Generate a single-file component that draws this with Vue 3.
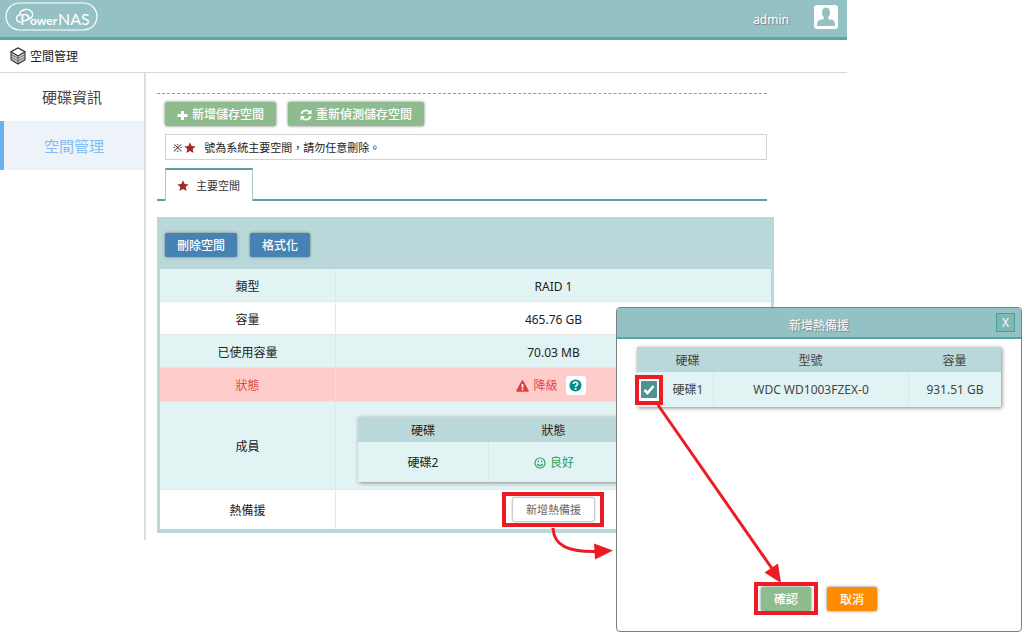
<script setup>
import { ref } from 'vue'

const hotSpareChecked = ref(true)
const members = [{ disk: '硬碟2', status: '良好' }]
const candidates = [{ disk: '硬碟1', model: 'WDC WD1003FZEX-0', size: '931.51 GB' }]
</script>

<template>
  <div class="page" lang="zh-Hant">
    <div class="app">
      <header class="topbar">
        <a class="logo" href="#" aria-label="PowerNAS">
          <svg width="94" height="30" viewBox="0 0 94 30" fill="none" stroke="#fff">
            <rect x="1" y="1" width="91" height="27" rx="13.5" stroke-width="1.2" />
            <path d="M16 20c-6 1-6-8 0-7M15 13c-1-5 8-8 12-3 2 4-1 7-4 7" stroke-width="1.4" />
            <text class="logo-text" y="23" fill="#fff" stroke="none"><tspan x="15">P</tspan><tspan class="logo-small" x="25">ower</tspan><tspan x="53">NAS</tspan></text>
          </svg>
        </a>
        <span class="user-name">admin</span>
        <button class="avatar" aria-label="admin">
          <svg width="24" height="24" viewBox="0 0 24 24">
            <rect width="24" height="24" rx="3" fill="#fff" />
            <path d="M8 7c0-6 8-6 8 0 0 3-.5 4-2 5.500 0 1.500 1 2 3 2 3 .5 4 2 4 6.500H3c0-4.500 1-6 4-6.500 2 0 3-.5 3-2C8.500 11 8 10 8 7z" fill="#94c2c4" />
          </svg>
        </button>
      </header>

      <div class="title-row">
        <svg width="16" height="18" viewBox="0 0 16 18" fill="none" stroke="#333" stroke-width="1.1" stroke-linejoin="round">
          <path d="M8 1l7 3.800v8L8 17l-7-4.200v-8z" fill="#ccc" />
          <path d="M8 1l7 3.800L8 9 1 4.800z" fill="#fff" />
          <path d="M8 9v8M1 7.500l7 4 7-4M1 10l7 4 7-4" stroke-width="0.6" />
        </svg>
        <h1>空間管理</h1>
      </div>

      <div class="body">
        <nav class="sidebar">
          <a href="#disks">硬碟資訊</a>
          <a href="#space" class="active">空間管理</a>
        </nav>

        <main class="main">
          <section class="intro">
            <div class="actions">
              <button class="btn green">
                <svg width="11" height="11" viewBox="0 0 11 11"><path d="M4 1h3v3h3.500v3H7v3H4V7H.5V4H4z" fill="#fff" /></svg>
                新增儲存空間
              </button>
              <button class="btn green">
                <svg width="12" height="12" viewBox="0 0 12 12" fill="none" stroke="#fff" stroke-width="1.900">
                  <path d="M1.500 5C2 1.500 7 0 9.500 3M10.500 7C10 10.500 5 12 2.500 9" />
                  <path d="M11.500.5V5H7zM.5 11.500V7H5z" fill="#fff" stroke="none" />
                </svg>
                重新偵測儲存空間
              </button>
            </div>
            <p class="notice">
              <span>※</span>
              <svg class="star" width="12" height="12" viewBox="0 0 12 12"><path d="M6 .3l1.700 3.700 4 .4-3 2.700.9 4L6 9l-3.600 2.100.9-4-3-2.700 4-.4z" fill="#a52a2a" /></svg>
              <span>號為系統主要空間，請勿任意刪除。</span>
            </p>
            <div class="tabs">
              <button class="tab">
                <svg width="12" height="12" viewBox="0 0 12 12"><path d="M6 .3l1.700 3.700 4 .4-3 2.700.9 4L6 9l-3.600 2.100.9-4-3-2.700 4-.4z" fill="#a52a2a" /></svg>
                主要空間
              </button>
            </div>
          </section>

          <section class="panel">
            <div class="panel-tools">
              <button class="btn blue">刪除空間</button>
              <button class="btn blue">格式化</button>
            </div>
            <table class="info">
              <tbody>
                <tr class="tint"><th scope="row">類型</th><td>RAID 1</td></tr>
                <tr><th scope="row">容量</th><td>465.76 GB</td></tr>
                <tr class="tint"><th scope="row">已使用容量</th><td>70.03 MB</td></tr>
                <tr class="alert">
                  <th scope="row">狀態</th>
                  <td>
                    <div class="status">
                      <svg width="13" height="12" viewBox="0 0 13 12">
                        <path d="M6.500.3q.7 0 1 .6l5.200 9.600q.4 1.200-.8 1.200H1.100q-1.200 0-.8-1.200L5.500.9q.3-.6 1-.6z" fill="#e04040" />
                        <path d="M6.500 4v3.700M6.500 8.600v1.700" stroke="#fff" stroke-width="1.600" />
                      </svg>
                      <span>降級</span>
                      <button class="help" aria-label="說明">
                        <svg width="13" height="13" viewBox="0 0 13 13" fill="none">
                          <circle cx="6.500" cy="6.500" r="6" fill="#008b8b" />
                          <path d="M4.300 5c.3-2.600 4.400-2.300 4.300 0C8.500 6.300 6.700 6.400 6.600 8" stroke="#fff" stroke-width="1.700" />
                          <path d="M5.700 9h1.800v1.700H5.700z" fill="#fff" />
                        </svg>
                      </button>
                    </div>
                  </td>
                </tr>
                <tr class="tint members-row">
                  <th scope="row">成員</th>
                  <td>
                    <table class="members">
                      <thead><tr><th>硬碟</th><th>狀態</th><td></td></tr></thead>
                      <tbody>
                        <tr v-for="m in members" :key="m.disk">
                          <td>{{ m.disk }}</td>
                          <td>
                            <div class="good">
                              <svg width="12" height="12" viewBox="0 0 12 12" fill="none" stroke="#2e9e5b" stroke-width="1.100">
                                <circle cx="6" cy="6" r="5" />
                                <path d="M3.300 7q2.700 3.400 5.400 0M4.300 3.500v1.700M7.700 3.500v1.700" stroke-width="1.300" />
                              </svg>
                              {{ m.status }}
                            </div>
                          </td>
                          <td></td>
                        </tr>
                      </tbody>
                    </table>
                  </td>
                </tr>
                <tr class="spare-row">
                  <th scope="row">熱備援</th>
                  <td><button class="btn plain">新增熱備援</button></td>
                </tr>
              </tbody>
            </table>
          </section>
        </main>
      </div>
    </div>

    <div class="dialog" role="dialog" aria-labelledby="dialog-title">
      <header class="dialog-head">
        <h2 id="dialog-title">新增熱備援</h2>
        <button class="close">X</button>
      </header>
      <table class="picker">
        <colgroup><col class="c-check" /><col class="c-disk" /><col /><col class="c-size" /></colgroup>
        <thead><tr><td></td><th>硬碟</th><th>型號</th><th>容量</th></tr></thead>
        <tbody>
          <tr v-for="c in candidates" :key="c.disk">
            <td>
              <label class="check" for="disk-1">
                <input id="disk-1" v-model="hotSpareChecked" type="checkbox" aria-label="硬碟1" />
                <svg v-if="hotSpareChecked" width="12" height="12" viewBox="0 0 12 12" fill="none" stroke="#fff" stroke-width="2.600"><path d="M1.500 6l3 3 6-7" /></svg>
              </label>
            </td>
            <td>{{ c.disk }}</td>
            <td>{{ c.model }}</td>
            <td>{{ c.size }}</td>
          </tr>
        </tbody>
      </table>
      <footer class="dialog-foot">
        <button class="btn green">確認</button>
        <button class="btn orange">取消</button>
      </footer>
    </div>

    <svg class="marks" width="1024" height="638" viewBox="0 0 1024 638" fill="none" stroke="#ed1c24" aria-hidden="true">
      <g stroke-width="4">
        <rect x="504" y="494" width="98" height="31" />
        <rect x="637" y="377" width="24" height="26" />
        <rect x="756" y="584" width="60" height="29" />
      </g>
      <path d="M553 528C554 546 568 552 596 551.500" stroke-width="3" />
      <path d="M658 405L773 570" stroke-width="3" />
      <path d="M594 543.500L613 550.500L595 559.500zM781 583L764.500 572.500L778 563.500z" fill="#ed1c24" stroke="none" />
    </svg>
  </div>
</template>

<style>
body {
  margin: 0;
  background: #fff;
}
</style>

<style scoped>
.page {
  position: relative;
  min-height: 100vh;
  overflow: hidden;
  font-family: "Noto Sans", "Noto Sans CJK TC", sans-serif;
  font-size: 12px;
  line-height: 18px;
  color: #222;
}
.page * { box-sizing: border-box; }
button {
  font: inherit;
  padding: 0;
  border: 0;
  cursor: pointer;
}
svg { display: block; flex: none; }
a { text-decoration: none; color: inherit; }
h1, h2, p { margin: 0; font-size: 12px; font-weight: 400; }

.app { margin-right: 177px; }
.topbar {
  display: flex;
  align-items: flex-start;
  height: 40px;
  padding: 2px 9px 0 5px;
  background: #94c2c4;
  border-bottom: 3px solid #55aaaa;
}
.logo { margin-right: auto; }
.logo-text { font: 16px Lato, sans-serif; }
.logo-small { font: bold 12px Lato, sans-serif; }
.user-name {
  margin: 9px 25px 0 0;
  color: #fff;
  text-shadow: 1px 1px 1px #777;
}
.avatar { margin-top: 3px; background: none; }
.title-row {
  display: flex;
  align-items: center;
  gap: 4px;
  height: 33px;
  padding-left: 10px;
  border-bottom: 1px solid #d8d8d8;
}
.title-row h1 { padding-top: 2px; }
.body { display: flex; }
.sidebar {
  width: 146px;
  flex: none;
  border-right: 2px solid #ddd;
}
.sidebar a {
  display: flex;
  align-items: center;
  justify-content: center;
  height: 48px;
  font-size: 15px;
  color: #444;
}
.sidebar .active {
  height: 49px;
  border-left: 4px solid #6cb1f2;
  background: #edf3f8;
  color: #80bdf5;
}
.main { flex: 1; padding: 20px 73px 7px 11px; }
.intro {
  margin-right: 7px;
  padding-top: 8px;
  border-top: 1px dashed #999;
}
.actions { display: flex; gap: 12px; padding-left: 8px; }
.btn {
  display: inline-flex;
  align-items: center;
  justify-content: center;
  gap: 4px;
  height: 24px;
  padding: 2px 12px 0;
  border-radius: 2px;
  color: #fff;
  font-weight: 500;
  box-shadow: 0 0 3px #777;
}
.green { background: #8fbc8f; }
.blue { background: #4682b4; }
.orange { background: #ff8c00; }
.notice {
  display: flex;
  align-items: center;
  height: 26px;
  margin: 8px 0 8px 8px;
  padding: 2px 0 0 7px;
  border: 1px solid #d3d3d3;
  font-size: 11px;
}
.star { margin: 0 8px 0 2px; }
.tabs {
  display: flex;
  height: 33px;
  margin-bottom: 16px;
  padding-left: 8px;
  border-bottom: 2px solid #5f9ea0;
}
.tab {
  display: flex;
  align-items: center;
  gap: 7px;
  height: 33px;
  padding: 0 12px 0 11px;
  background: #fff;
  border: 1px solid #a5c9ca;
  border-top: 2px solid #5f9ea0;
  border-bottom: 0;
  font-size: 11px;
  color: #333;
}
.panel { padding: 0 3px 4px; background: #bad7d9; }
.panel-tools {
  display: flex;
  gap: 13px;
  height: 52px;
  padding: 16px 5px 0;
}
table { border-collapse: separate; border-spacing: 0; table-layout: fixed; }
th, td { padding: 0; font-weight: 400; text-align: center; vertical-align: middle; }
.info { width: 100%; background: #fff; }
.info > tbody > tr > th { width: 176px; border-right: 1px solid #e2e6e6; }
.info > tbody > tr > * { height: 33px; border-bottom: 1px solid #e2e6e6; padding-top: 3px; }
.tint { background: #e1f3f3; }
.info .alert { background: #ffcccc; color: #e04848; }
.info > tbody > .alert > * { height: 34px; padding: 2px 0 0; }
.info > tbody > .members-row > * { height: 88px; padding: 3px 0 0; }
.info > tbody > .members-row > td { padding: 8px 0 0; }
.info > tbody > .spare-row > th { padding: 3px 0 0; }
.info > tbody > .spare-row > * { height: 39px; border-bottom: 0; padding: 0; }
.status, .good { display: flex; align-items: center; justify-content: center; gap: 4px; }
.status { margin-right: 5px; }
.help {
  display: grid;
  place-items: center;
  width: 20px;
  height: 19px;
  margin-left: 4px;
  border-radius: 3px;
  background: #fff;
}
.members {
  width: 90%;
  margin: 0 auto;
  background: #e1f3f3;
  box-shadow: 1px 1px 4px #888;
}
.members thead, .picker thead { background: #bad7d9; }
.members thead tr > * { height: 25px; padding-top: 2px; }
.members tbody td { height: 40px; padding-top: 2px; border-left: 1px solid #d8e8e8; }
.members tbody td:first-child { border-left: 0; }
.good { color: #2e9e5b; }
.plain {
  height: 25px;
  border: 1px solid #ccc;
  border-radius: 3px;
  background: #fff;
  color: #666;
  font-size: 11px;
  font-weight: 400;
  padding: 1px 13px 0;
  vertical-align: middle;
  box-shadow: 0 0 2px #bbb;
}

.dialog {
  position: absolute;
  top: 307px;
  left: 616px;
  display: flex;
  flex-direction: column;
  width: 406px;
  height: 325px;
  border: 1px solid #788080;
  border-radius: 4px;
  background: #fff;
}
.dialog-head {
  position: relative;
  height: 31px;
  padding-top: 9px;
  background: #94c2c4;
  border-bottom: 2px solid #4fa9a8;
  border-radius: 3px 3px 0 0;
  color: #fff;
  text-align: center;
  text-shadow: 1px 1px 1px #777;
}
.close {
  position: absolute;
  top: 5px;
  right: 6px;
  width: 19px;
  height: 19px;
  border: 1px solid #4b9d98;
  background: #7db7b6;
  color: #fff;
}
.picker {
  width: calc(100% - 40px);
  margin: 8px 20px 0;
  background: #e1f3f3;
  box-shadow: 1px 1px 4px #888;
  color: #444;
}
.c-check { width: 25px; }
.c-disk { width: 51px; }
.c-size { width: 93px; }
.picker thead tr > * { height: 25px; padding-top: 2px; }
.picker tbody td { height: 35px; border-left: 1px solid #d8e8e8; }
.picker tbody td:first-child { border-left: 0; }
.check {
  position: relative;
  display: grid;
  place-items: center;
  width: 20px;
  height: 22px;
  margin-left: 2px;
  background: #fff;
}
.check input {
  appearance: none;
  width: 16px;
  height: 17px;
  margin: 0;
  border-radius: 1px;
  background: #4b9590;
}
.check svg { position: absolute; top: 5px; left: 4px; }
.dialog-foot {
  display: flex;
  justify-content: center;
  gap: 16px;
  margin-top: auto;
  padding-bottom: 20px;
}
.dialog-foot .btn { width: 50px; }
.marks { position: absolute; top: 0; left: 0; pointer-events: none; }
</style>
